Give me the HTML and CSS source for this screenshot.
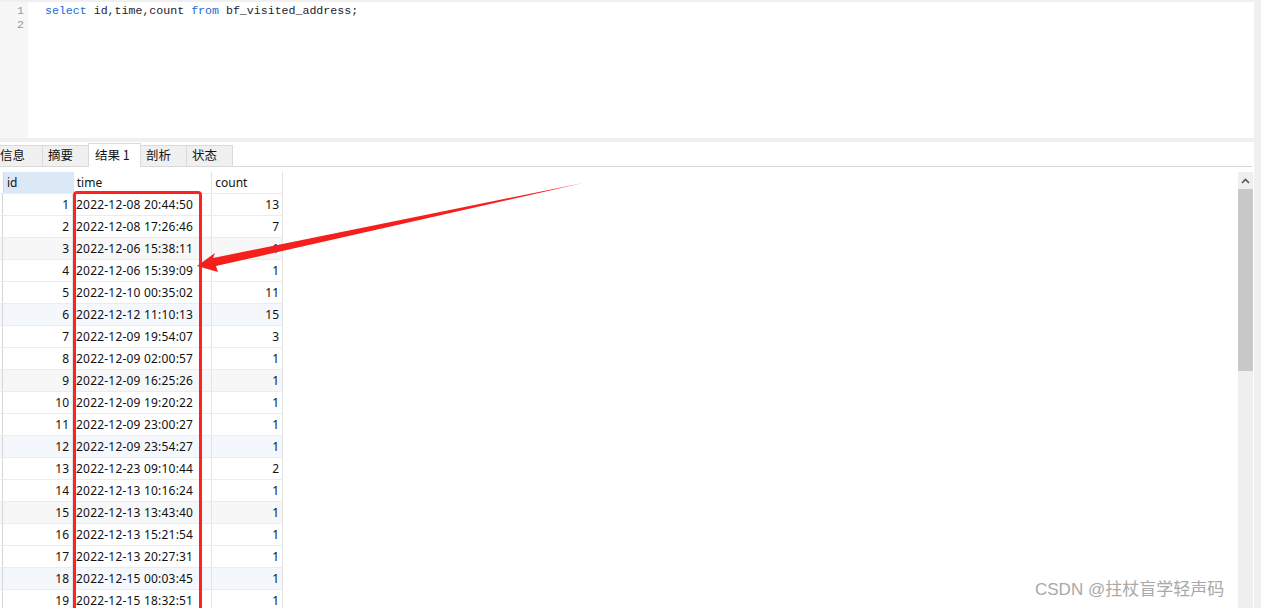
FILE: index.html
```html
<!DOCTYPE html>
<html>
<head>
<meta charset="utf-8">
<link rel="stylesheet" href="styles.css">
</head>
<body>
<div class="editor">
  <div class="gutter"><div>1</div><div>2</div></div>
  <div class="code"><div><span class="kw">select</span> id,time,count <span class="kw">from</span> bf_visited_address;</div><div>&nbsp;</div></div>
</div>
<div class="results">
  <div class="tabs">
    <div class="tab first">信息</div>
    <div class="tab">摘要</div>
    <div class="tab active">结果 1</div>
    <div class="tab">剖析</div>
    <div class="tab">状态</div>
  </div>
  <div class="gridarea">
    <div class="gridwrap">
    <div class="grid">
      <div class="row head"><div class="c mark"></div><div class="c id sel">id</div><div class="c time">time</div><div class="c cnt">count</div></div>
      <div class="row"><div class="c mark cur"></div><div class="c id">1</div><div class="c time">2022-12-08 20:44:50</div><div class="c cnt">13</div></div>
      <div class="row"><div class="c mark"></div><div class="c id">2</div><div class="c time">2022-12-08 17:26:46</div><div class="c cnt">7</div></div>
      <div class="row g"><div class="c mark"></div><div class="c id">3</div><div class="c time">2022-12-06 15:38:11</div><div class="c cnt">1</div></div>
      <div class="row"><div class="c mark"></div><div class="c id">4</div><div class="c time">2022-12-06 15:39:09</div><div class="c cnt">1</div></div>
      <div class="row"><div class="c mark"></div><div class="c id">5</div><div class="c time">2022-12-10 00:35:02</div><div class="c cnt">11</div></div>
      <div class="row b"><div class="c mark"></div><div class="c id">6</div><div class="c time">2022-12-12 11:10:13</div><div class="c cnt">15</div></div>
      <div class="row"><div class="c mark"></div><div class="c id">7</div><div class="c time">2022-12-09 19:54:07</div><div class="c cnt">3</div></div>
      <div class="row"><div class="c mark"></div><div class="c id">8</div><div class="c time">2022-12-09 02:00:57</div><div class="c cnt">1</div></div>
      <div class="row g"><div class="c mark"></div><div class="c id">9</div><div class="c time">2022-12-09 16:25:26</div><div class="c cnt">1</div></div>
      <div class="row"><div class="c mark"></div><div class="c id">10</div><div class="c time">2022-12-09 19:20:22</div><div class="c cnt">1</div></div>
      <div class="row"><div class="c mark"></div><div class="c id">11</div><div class="c time">2022-12-09 23:00:27</div><div class="c cnt">1</div></div>
      <div class="row b"><div class="c mark"></div><div class="c id">12</div><div class="c time">2022-12-09 23:54:27</div><div class="c cnt">1</div></div>
      <div class="row"><div class="c mark"></div><div class="c id">13</div><div class="c time">2022-12-23 09:10:44</div><div class="c cnt">2</div></div>
      <div class="row"><div class="c mark"></div><div class="c id">14</div><div class="c time">2022-12-13 10:16:24</div><div class="c cnt">1</div></div>
      <div class="row g"><div class="c mark"></div><div class="c id">15</div><div class="c time">2022-12-13 13:43:40</div><div class="c cnt">1</div></div>
      <div class="row"><div class="c mark"></div><div class="c id">16</div><div class="c time">2022-12-13 15:21:54</div><div class="c cnt">1</div></div>
      <div class="row"><div class="c mark"></div><div class="c id">17</div><div class="c time">2022-12-13 20:27:31</div><div class="c cnt">1</div></div>
      <div class="row b"><div class="c mark"></div><div class="c id">18</div><div class="c time">2022-12-15 00:03:45</div><div class="c cnt">1</div></div>
      <div class="row"><div class="c mark"></div><div class="c id">19</div><div class="c time">2022-12-15 18:32:51</div><div class="c cnt">1</div></div>
    </div>
    </div>
    <div class="scrollbar">
      <div class="sb-up"><svg width="9" height="6" viewBox="0 0 9 6"><path d="M1 5 L4.5 1.5 L8 5" fill="none" stroke="#555" stroke-width="1.6"/></svg></div>
      <div class="sb-thumb"></div>
    </div>
  </div>
</div>
<svg class="annot" width="1261" height="608" viewBox="0 0 1261 608">
  <path d="M74.5 608 V195 Q74.5 192.5 77 192.5 H198 Q200.5 192.5 200.5 195 V608" fill="none" stroke="#f22" stroke-width="3"/>
  <polygon points="583,183 213,258 215,253 197,266 218,272 216,266" fill="#f5201d"/>
</svg>
<div class="watermark">CSDN @拄杖盲学轻声码</div>
</body>
</html>
```
FILE: styles.css
```css
html, body {
  margin: 0;
  padding: 0;
}
body {
  width: 1261px;
  height: 608px;
  overflow: hidden;
  background: #f0f0f0;
  position: relative;
  font-family: "Noto Sans", "Noto Sans CJK SC", sans-serif;
}
.editor {
  margin-top: 2px;
  width: 1254px;
  height: 136px;
  background: #fff;
  display: flex;
}
.gutter {
  width: 28px;
  background: #f7f7f7;
  color: #999;
  font-family: "Liberation Mono", monospace;
  font-size: 11.6px;
  line-height: 14px;
  padding-top: 2px;
  box-sizing: border-box;
  text-align: right;
  padding-right: 4px;
}
.code {
  padding-left: 17px;
  padding-top: 2px;
  font-family: "Liberation Mono", monospace;
  font-size: 11.6px;
  line-height: 14px;
  color: #1c2033;
  white-space: pre;
}
.kw { color: #1d6bd6; }
.results {
  margin-top: 4px;
  width: 1254px;
  height: 466px;
  background: #fff;
  display: flex;
  flex-direction: column;
}
.tabs {
  height: 24px;
  display: flex;
  align-items: flex-end;
  border-bottom: 1px solid #d9d9d9;
  margin-right: 2px;
}
.tab {
  height: 21px;
  background: #f0f0f0;
  border: 1px solid #dadada;
  border-bottom: none;
  font-family: "Noto Sans CJK SC", sans-serif;
  font-size: 12.5px;
  color: #111;
  line-height: 18px;
  width: 47px;
  padding-left: 5px;
  box-sizing: border-box;
  margin-left: -1px;
}
.tab.first {
  width: 44px;
  padding-left: 0;
  margin-left: -1px;
}
.tab.active {
  height: 24px;
  background: #fff;
  line-height: 21px;
  width: 53px;
  padding-left: 6px;
  margin-bottom: -1px;
  position: relative;
}
.gridarea {
  flex: 1;
  display: flex;
  padding-top: 5px;
  overflow: hidden;
}
.gridwrap {
  flex: 1;
}
.grid {
  width: 283px;
  font-size: 12px;
  color: #111;
}
.row {
  display: flex;
  height: 22px;
  border-bottom: 1px solid #ececec;
  box-sizing: border-box;
}
.row.g { background: #f7f7f7; }
.row.b { background: #f4f8fd; }
.c {
  height: 21px;
  line-height: 21px;
  border-right: 1px solid #e4e4e4;
  box-sizing: border-box;
  white-space: nowrap;
  overflow: hidden;
}
.mark { width: 3px; border-right: 1px solid #d6d6d6; }
.id { width: 70px; text-align: right; padding-right: 3px; }
.time { width: 139px; padding-left: 3px; letter-spacing: 0.2px; }
.cnt { width: 71px; text-align: right; padding-right: 3px; }
.head { background: #fff; }
.head .c { text-align: left; padding-left: 3px; padding-right: 0; letter-spacing: 0; }
.head .sel { background: #dbe9f7; }
.scrollbar {
  width: 15px;
  margin-right: 1px;
  background: #efefef;
  display: flex;
  flex-direction: column;
}
.sb-up {
  height: 17px;
  display: flex;
  align-items: center;
  justify-content: center;
}
.sb-thumb {
  height: 182px;
  background: #c8c8c8;
}
.annot {
  position: absolute;
  left: 0;
  top: 0;
  pointer-events: none;
}
.watermark {
  position: absolute;
  left: 1035px;
  top: 575px;
  font-family: "Liberation Sans", "Noto Sans CJK SC", sans-serif;
  font-size: 17px;
  color: #a0a0a0;
  opacity: 0.9;
}
```
